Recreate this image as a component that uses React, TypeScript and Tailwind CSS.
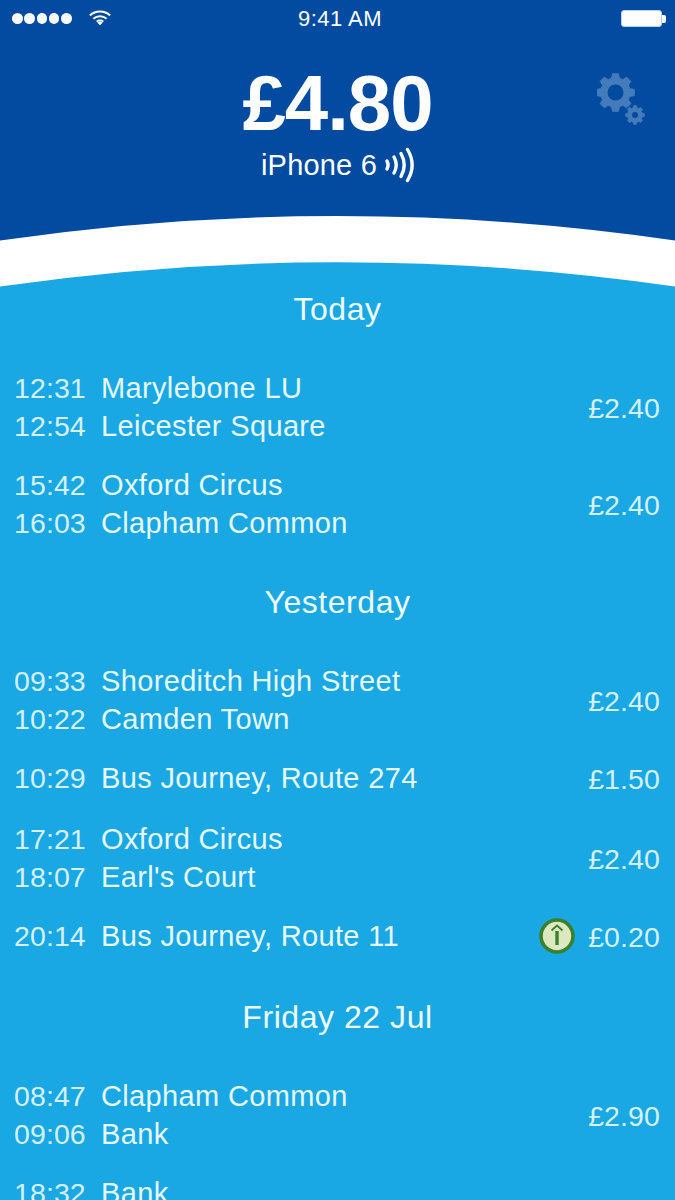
import React from "react";

function gearPath(cx: number, cy: number, rOut: number, rIn: number, teeth: number) {
  let d = "";
  const step = (Math.PI * 2) / teeth;
  for (let i = 0; i < teeth; i++) {
    const a = i * step - Math.PI / 2;
    const pts = [
      [a - step * 0.34, rIn],
      [a - step * 0.2, rOut],
      [a + step * 0.2, rOut],
      [a + step * 0.34, rIn],
    ];
    pts.forEach(([ang, r], j) => {
      const x = cx + r * Math.cos(ang);
      const y = cy + r * Math.sin(ang);
      d += `${i === 0 && j === 0 ? "M" : "L"}${x.toFixed(2)} ${y.toFixed(2)} `;
    });
  }
  return d + "Z";
}

function Gears() {
  return (
    <svg width="50" height="54" viewBox="0 0 50 54" className="block">
      <path d={gearPath(18.5, 19.5, 19, 14.8, 8)} fill="#437bbb" stroke="#437bbb" strokeWidth="1" strokeLinejoin="round" />
      <circle cx="18.5" cy="19.5" r="8" fill="#024ba1" />
      <path d={gearPath(38, 42, 9.5, 7.4, 8)} fill="#437bbb" stroke="#437bbb" strokeWidth="0.6" strokeLinejoin="round" />
      <circle cx="38" cy="42" r="3" fill="#024ba1" />
    </svg>
  );
}

function Contactless() {
  return (
    <svg width="30" height="36" viewBox="0 0 30 36" fill="none" stroke="#fff" strokeLinecap="round" strokeWidth="3.4" className="block">
      <path d="M3 14c1.4 2.6 1.4 5.4 0 8" />
      <path d="M10 10c2.8 5 2.8 11 0 16" />
      <path d="M17 6.5c4.2 7.5 4.2 15.5 0 23" />
      <path d="M23.5 2.5c6 10 6 21 0 31" />
    </svg>
  );
}

function Wifi() {
  return (
    <svg width="22" height="17" viewBox="0 0 24 17" fill="none" stroke="#fff" strokeWidth="2.2" className="block">
      <path d="M1 6.3C7 .6 17 .6 23 6.3" />
      <path d="M4.8 9.8c4-3.7 10.4-3.7 14.4 0" />
      <path d="M8.4 13c2-1.8 5.2-1.8 7.2 0" />
      <path d="M12 17l-3-3.1c1.7-1.3 4.3-1.3 6 0z" fill="#fff" stroke="none" />
    </svg>
  );
}

function Leaf() {
  return (
    <svg width="36" height="36" viewBox="0 0 36 36" className="block">
      <circle cx="18" cy="18" r="16" fill="#dbe8c0" stroke="#3c7f2c" strokeWidth="3.6" />
      <path d="M18 13v14" stroke="#3c7f2c" strokeWidth="3.4" fill="none" />
      <path d="M12.5 12.5L18 7.5l5.5 5" stroke="#3c7f2c" strokeWidth="1.8" fill="none" />
    </svg>
  );
}

type Trip = { lines: [string, string][]; price: string; leaf?: boolean; push?: boolean };

function TripRow({ lines, price, leaf, push }: Trip) {
  return (
    <div className={push ? "flex items-center pl-[14px] pr-[15px] mt-[2px]" : "flex items-center pl-[14px] pr-[15px]"}>
      <div className="flex flex-col flex-1">
        {lines.map(([t, n]) => (
          <div key={t} className="flex h-[38px] items-center">
            <span className="w-[87px] text-[28.5px] tracking-[0.1px] text-[#d5f0fb]">{t}</span>
            <span className="text-[29px] tracking-[0.35px] text-[#e6f7fd]">{n}</span>
          </div>
        ))}
      </div>
      {leaf && (
        <div className="mr-[13px]">
          <Leaf />
        </div>
      )}
      <span className="mt-[2px] text-[28.5px] tracking-[0.1px] text-[#d5f0fb]">{price}</span>
    </div>
  );
}

function Heading({ children }: { children: React.ReactNode }) {
  return <div className="h-[38px] flex items-center justify-center text-[32px] tracking-[0.55px] text-[#eef9fe]">{children}</div>;
}

function Section({ title, trips }: { title: string; trips: Trip[] }) {
  return (
    <section className="flex flex-col">
      <Heading>{title}</Heading>
      <div className="mt-[41px] flex flex-col gap-[21px]">
        {trips.map((t) => (
          <TripRow key={t.lines[0][0]} {...t} />
        ))}
      </div>
    </section>
  );
}

export default function App() {
  return (
    <div
      className="w-[675px] h-[1200px] overflow-hidden bg-[#19a8e4] text-[28px] leading-none"
      style={{ fontFamily: '"Liberation Sans", Arial, sans-serif' }}
    >
      <header className="bg-[#024ba1] h-[216px] text-white flex flex-col">
        <div className="relative h-[36px] flex items-center justify-center text-[22px] tracking-[0.5px]">
          <div className="absolute left-[12px] top-[13px] flex gap-[1.8px]">
            {[0, 1, 2, 3, 4].map((i) => (
              <div key={i} className="w-[10.5px] h-[10.5px] rounded-full bg-white" />
            ))}
          </div>
          <div className="absolute left-[89px] top-[9px]">
            <Wifi />
          </div>
          <span className="ml-[5px] mt-[2px]">9:41 AM</span>
          <div className="absolute left-[621px] top-[10px] flex items-center">
            <div className="w-[41px] h-[17px] rounded-[3px] border border-[#b9d0ea] bg-white" />
            <div className="w-[4px] h-[8px] bg-white rounded-r-[2px]" />
          </div>
        </div>
        <div className="relative flex flex-col items-center">
          <div className="mt-[28px] text-[78px] font-bold leading-[78px] tracking-[-1px]">£4.80</div>
          <div className="mt-[5px] h-[36px] flex items-center gap-[7px] text-[29px] tracking-[0.2px]">
            <span>iPhone 6</span>
            <Contactless />
          </div>
          <div className="absolute left-[597px] top-[37px]">
            <Gears />
          </div>
        </div>
      </header>
      <svg width="675" height="72" viewBox="0 0 675 72" className="block">
        <rect width="675" height="72" fill="#fff" />
        <path d="M0 24.5Q337.5 -24.5 675 24.5V0H0Z" fill="#024ba1" />
        <path d="M0 70.5Q337.5 22 675 70.5V72H0Z" fill="#19a8e4" />
      </svg>
      <main className="flex flex-col gap-[41px] pt-[2px]">
        <Section
          title="Today"
          trips={[
            { lines: [["12:31", "Marylebone LU"], ["12:54", "Leicester Square"]], price: "£2.40" },
            { lines: [["15:42", "Oxford Circus"], ["16:03", "Clapham Common"]], price: "£2.40" },
          ]}
        />
        <Section
          title="Yesterday"
          trips={[
            { lines: [["09:33", "Shoreditch High Street"], ["10:22", "Camden Town"]], price: "£2.40" },
            { lines: [["10:29", "Bus Journey, Route 274"]], price: "£1.50" },
            { lines: [["17:21", "Oxford Circus"], ["18:07", "Earl's Court"]], price: "£2.40", push: true },
            { lines: [["20:14", "Bus Journey, Route 11"]], price: "£0.20", leaf: true },
          ]}
        />
        <div className="mt-[2px]">
          <Section
            title="Friday 22 Jul"
            trips={[
              { lines: [["08:47", "Clapham Common"], ["09:06", "Bank"]], price: "£2.90" },
              { lines: [["18:32", "Bank"]], price: "" },
            ]}
          />
        </div>
      </main>
    </div>
  );
}
